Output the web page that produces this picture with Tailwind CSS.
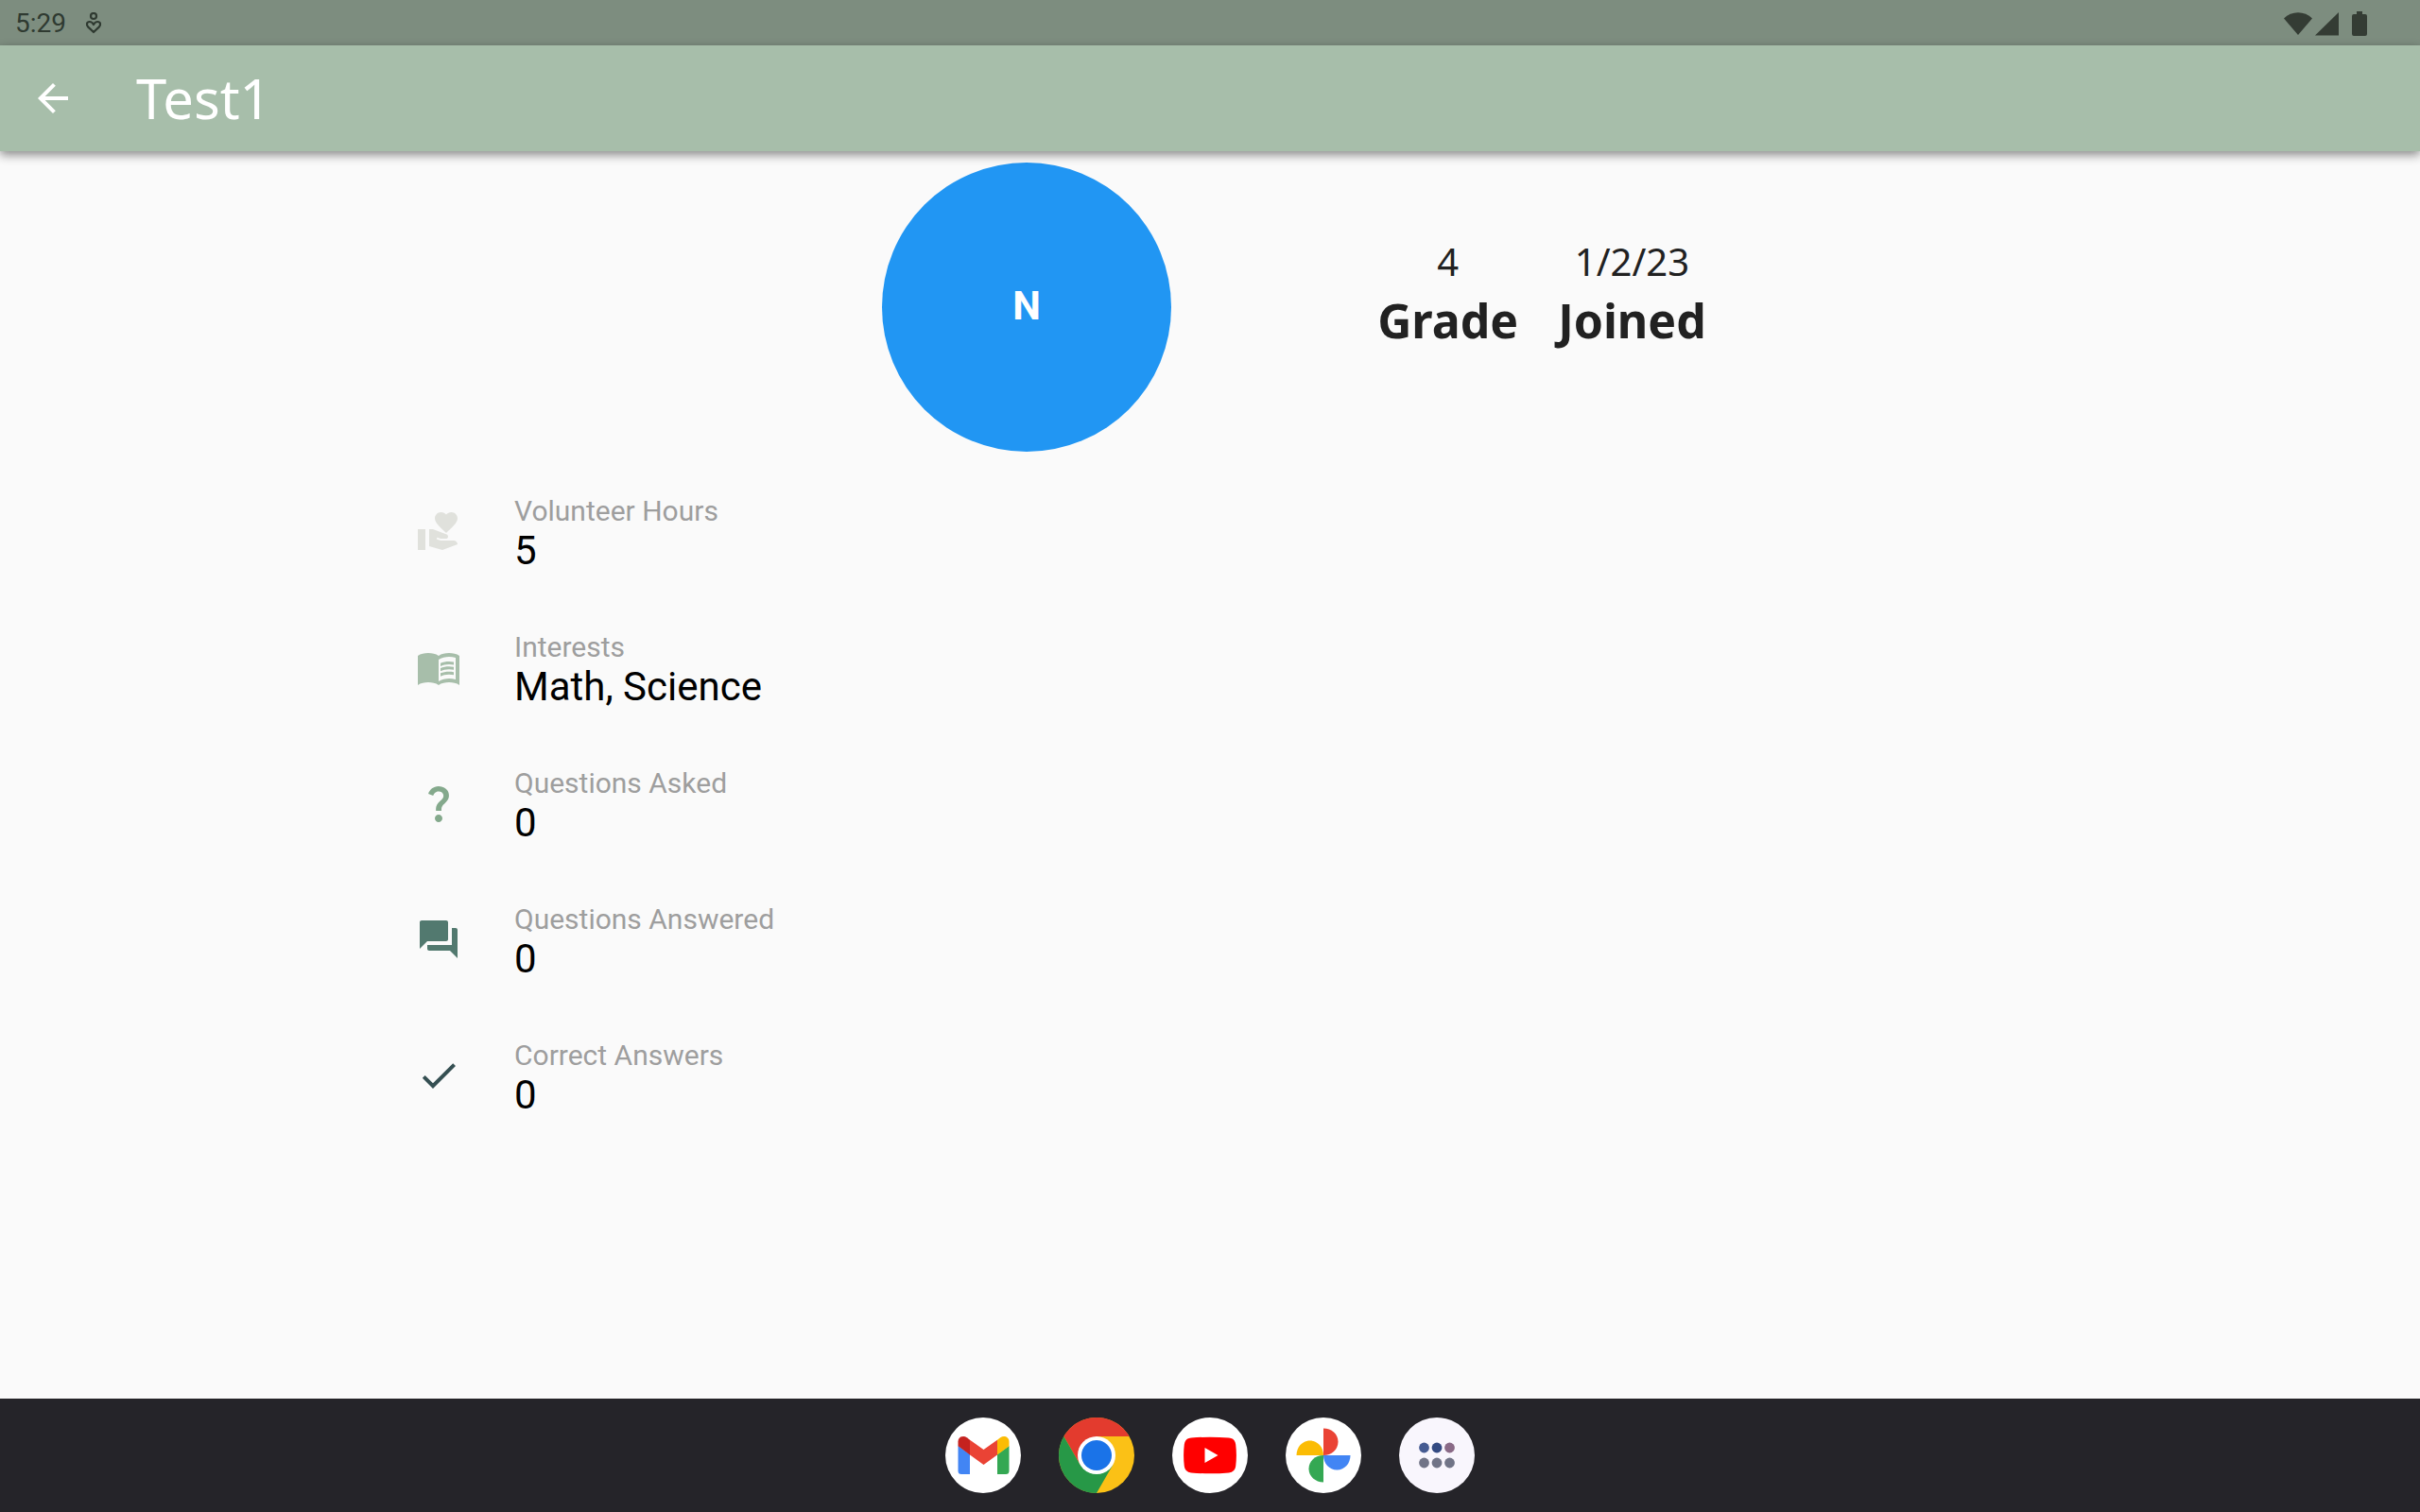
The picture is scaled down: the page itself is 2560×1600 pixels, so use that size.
<!DOCTYPE html>
<html lang="en">
<head>
<meta charset="utf-8">
<meta name="viewport" content="width=device-width, initial-scale=1">
<title>Test1</title>
<script src="https://cdn.jsdelivr.net/npm/@tailwindcss/browser@4"></script>
</head>
<body class="flex min-h-screen flex-col bg-[#fafafa] font-[Roboto,sans-serif]">
  <!-- System status bar -->
  <div class="flex h-12 items-center justify-between bg-[#7d8d7f] pt-0.5 pr-[54px] pl-4 text-[#2f3a31]">
    <div class="flex items-center gap-5">
      <span class="text-[28px] leading-8">5:29</span>
      <svg class="h-6 w-[18px]" viewBox="0 0 18 24" fill="none" stroke="currentColor" stroke-width="2.2" aria-hidden="true">
        <circle cx="9" cy="4" r="3"/>
        <path d="M9 21 3.300 15.600C.9 13.200 1.800 10 4.700 10 6.600 10 8 11 9 13 10 11 11.400 10 13.300 10 16.200 10 17.100 13.200 14.700 15.600z" stroke-linejoin="round"/>
      </svg>
    </div>
    <svg class="h-7 w-[90px]" viewBox="0 0 90 28" fill="#343c34" aria-hidden="true">
      <path d="M0 8.500C8 0 22 0 30 8.500L15 26z"/>
      <path d="M58 2v24.500H33z"/>
      <path d="M77 1h6v3h3a2 2 0 0 1 2 2v19a2 2 0 0 1-2 2H74a2 2 0 0 1-2-2V6a2 2 0 0 1 2-2h3z"/>
    </svg>
  </div>

  <header class="relative flex h-28 items-center gap-16 bg-[#a7beaa] pl-8 text-white shadow-[0_4px_10px_rgba(0,0,0,0.45)]">
    <button type="button" aria-label="Back" class="size-12">
      <svg class="size-12" viewBox="0 0 24 24" fill="currentColor" aria-hidden="true"><path d="M20 11H7.830l5.590-5.590L12 4l-8 8 8 8 1.410-1.410L7.830 13H20z"/></svg>
    </button>
    <h1 class="font-['Noto_Sans',sans-serif] text-[58px] leading-20">Test1</h1>
  </header>

  <main class="flex grow flex-col">
    <section class="flex items-start justify-center gap-[218px] pt-3 pl-[178px]">
      <div class="flex size-[306px] items-center justify-center rounded-full bg-[#2196f3] pb-1 text-[42px] font-bold text-white">N</div>
      <dl class="flex gap-[42px] pt-[77px] text-center font-['Noto_Sans',sans-serif] text-[#212121]">
        <div class="flex flex-col-reverse">
          <dt class="text-[50px] leading-17 font-bold">Grade</dt>
          <dd class="text-[40px] leading-14">4</dd>
        </div>
        <div class="flex flex-col-reverse">
          <dt class="text-[50px] leading-17 font-bold">Joined</dt>
          <dd class="text-[40px] leading-14">1/2/23</dd>
        </div>
      </dl>
    </section>

    <ul class="mx-auto mt-3 w-full max-w-[1744px] px-8">
      <li class="flex h-36 items-center gap-14">
        <svg class="size-12 text-[#e0e1dc]" viewBox="0 0 24 24" fill="currentColor" aria-hidden="true"><path d="M1 11h4v11H1zM16 3.250C16.650 2.490 17.660 2 18.700 2 20.550 2 22 3.450 22 5.300c0 2.270-2.910 4.900-6 7.700-3.090-2.810-6-5.440-6-7.700C10 3.450 11.450 2 13.300 2c1.040 0 2.050.490 2.700 1.250zM20 17h-7l-2.090-.730.330-.940L13 16h2.820c.650 0 1.180-.530 1.180-1.180 0-.490-.310-.930-.770-1.110L8.970 11H7v9.020L14 22l8.010-3c-.010-1.110-.900-2-2.010-2z"/></svg>
        <div class="pt-1.5"><p class="text-[30px] leading-9 text-[#9e9e9e]">Volunteer Hours</p><p class="text-[42px] leading-12 text-black">5</p></div>
      </li>
      <li class="flex h-36 items-center gap-14">
        <svg class="size-12 text-[#a7beaa]" viewBox="0 0 24 24" fill="currentColor" aria-hidden="true"><path fill-rule="evenodd" d="M1 6c1.450-1.100 3.550-1.500 5.500-1.500S10.550 4.900 12 6c1.450-1.100 3.550-1.500 5.500-1.500S21.550 4.900 23 6v15.500C21.550 20.400 19.450 20 17.500 20s-4.050.400-5.500 1.500C10.550 20.400 8.450 20 6.500 20S2.450 20.400 1 21.500zM21 18.500V7c-1.100-.350-2.300-.500-3.500-.500-1.700 0-4.150.650-5.500 1.500v11.500c1.350-.850 3.800-1.500 5.500-1.500 1.200 0 2.400.150 3.500.500z"/><path d="M17.500 10.500c.880 0 1.730.090 2.500.260V9.240c-.790-.150-1.640-.240-2.500-.240-1.700 0-3.240.290-4.500.830v1.660c1.130-.640 2.700-.990 4.500-.990zM13 12.490v1.660c1.130-.640 2.700-.990 4.500-.990.880 0 1.730.090 2.500.260V11.900c-.790-.150-1.640-.240-2.500-.240-1.700 0-3.240.300-4.500.830zM17.500 14.330c-1.700 0-3.240.290-4.500.830v1.660c1.130-.640 2.700-.990 4.500-.990.880 0 1.730.090 2.500.260v-1.520c-.790-.160-1.640-.240-2.500-.240z"/></svg>
        <div class="pt-1.5"><p class="text-[30px] leading-9 text-[#9e9e9e]">Interests</p><p class="text-[42px] leading-12 text-black">Math, Science</p></div>
      </li>
      <li class="flex h-36 items-center gap-14">
        <svg class="size-12 text-[#84a98c]" viewBox="0 0 24 24" fill="currentColor" aria-hidden="true"><path d="M11.070 12.850c.770-1.390 2.250-2.210 3.110-3.440.910-1.290.400-3.700-2.180-3.700-1.690 0-2.520 1.280-2.870 2.340L6.540 6.960C7.250 4.830 9.180 3 11.990 3c2.350 0 3.960 1.070 4.780 2.410.700 1.150 1.110 3.300.030 4.900-1.200 1.770-2.350 2.310-2.970 3.450-.250.460-.350.760-.350 2.240h-2.890c-.010-.780-.130-2.050.480-3.150zM14 20c0 1.100-.900 2-2 2s-2-.900-2-2 .900-2 2-2 2 .900 2 2z"/></svg>
        <div class="pt-1.5"><p class="text-[30px] leading-9 text-[#9e9e9e]">Questions Asked</p><p class="text-[42px] leading-12 text-black">0</p></div>
      </li>
      <li class="flex h-36 items-center gap-14">
        <svg class="size-12 text-[#52796f]" viewBox="0 0 24 24" fill="currentColor" aria-hidden="true"><path d="M21 6h-2v9H6v2c0 .550.450 1 1 1h11l4 4V7c0-.550-.450-1-1-1zM17 12V3c0-.550-.450-1-1-1H3c-.550 0-1 .450-1 1v14l4-4h10c.550 0 1-.450 1-1z"/></svg>
        <div class="pt-1.5"><p class="text-[30px] leading-9 text-[#9e9e9e]">Questions Answered</p><p class="text-[42px] leading-12 text-black">0</p></div>
      </li>
      <li class="flex h-36 items-center gap-14">
        <svg class="size-12 text-[#354f52]" viewBox="0 0 24 24" fill="currentColor" aria-hidden="true"><path d="M9 16.170 4.830 12l-1.420 1.410L9 19 21 7l-1.410-1.410z"/></svg>
        <div class="pt-1.5"><p class="text-[30px] leading-9 text-[#9e9e9e]">Correct Answers</p><p class="text-[42px] leading-12 text-black">0</p></div>
      </li>
    </ul>
  </main>

  <!-- Taskbar -->
  <nav aria-label="Taskbar" class="flex h-30 items-center justify-center gap-10 bg-[#252429]">
    <button type="button" aria-label="Gmail" class="size-20">
      <svg class="size-20" viewBox="0 0 80 80" aria-hidden="true"><circle cx="40" cy="40" r="40" fill="#fff"/>
        <path fill="#4285f4" d="M13.500 30 26 39v21H17a3.500 3.500 0 0 1-3.500-3.500z"/><path fill="#34a853" d="M67.500 30 55 39v21h9a3.500 3.500 0 0 0 3.500-3.500z"/>
        <path fill="#ea4335" d="M26 23.700 40.500 34 55 23.700V39.500L40.500 50 26 39.500z"/><path fill="#c5221f" d="M13.500 25.500c0-5 5.500-7 9.300-4.300L26 23.700V39.500l-12.500-9.300z"/><path fill="#fbbc04" d="M67.500 25.500c0-5-5.500-7-9.300-4.300L55 23.700V39.500l12.500-9.300z"/></svg>
    </button>
    <button type="button" aria-label="Chrome" class="size-20">
      <svg class="size-20" viewBox="0 0 80 80" aria-hidden="true">
        <circle cx="40" cy="40" r="40" fill="#fbc116"/>
        <path fill="#e33b2e" d="M5.360 20A40 40 0 0 1 74.640 20H40L22.680 50z"/>
        <path fill="#279847" d="M5.360 20A40 40 0 0 0 40 80L57.320 50 40 40 22.680 50z"/>
        <circle cx="40" cy="40" r="20" fill="#fff"/><circle cx="40" cy="40" r="16" fill="#1a73e8"/></svg>
    </button>
    <button type="button" aria-label="YouTube" class="size-20">
      <svg class="size-20" viewBox="0 0 80 80" aria-hidden="true"><circle cx="40" cy="40" r="40" fill="#fff"/>
        <path fill="#f00" d="M20 21.600Q40 19.800 60 21.600 66.500 22.200 67.200 28.500 68.600 40 67.200 51.500 66.500 57.800 60 58.400 40 60.200 20 58.400 13.500 57.800 12.800 51.500 11.400 40 12.800 28.500 13.500 22.200 20 21.600z"/><path fill="#fff" d="m34.500 32 14 8-14 8z"/></svg>
    </button>
    <button type="button" aria-label="Photos" class="size-20">
      <svg class="size-20" viewBox="0 0 80 80" aria-hidden="true"><circle cx="40" cy="40" r="40" fill="#fff"/>
        <path fill="#ea4335" d="M40 11.500c8.500 0 15.500 6 15.500 14.200S48.500 40 40 40z"/><path fill="#4285f4" d="M68.500 40c0 8.500-6 15.500-14.200 15.500S40 48.500 40 40z"/><path fill="#34a853" d="M40 68.500c-8.500 0-15.500-6-15.500-14.200S31.500 40 40 40z"/><path fill="#fbbc04" d="M11.500 40c0-8.500 6-15.500 14.200-15.500S40 31.500 40 40z"/></svg>
    </button>
    <button type="button" aria-label="All apps" class="size-20">
      <svg class="size-20" viewBox="0 0 80 80" aria-hidden="true"><circle cx="40" cy="40" r="40" fill="#f9f6fd"/>
        <circle cx="26.500" cy="32" r="5.400" fill="#465b92"/><circle cx="40" cy="32" r="5.400" fill="#344a82"/><circle cx="53.500" cy="32" r="5.400" fill="#8a6a87"/>
        <g fill="#717487"><circle cx="26.500" cy="48" r="5.400"/><circle cx="40" cy="48" r="5.400"/><circle cx="53.500" cy="48" r="5.400"/></g></svg>
    </button>
  </nav>
</body>
</html>
